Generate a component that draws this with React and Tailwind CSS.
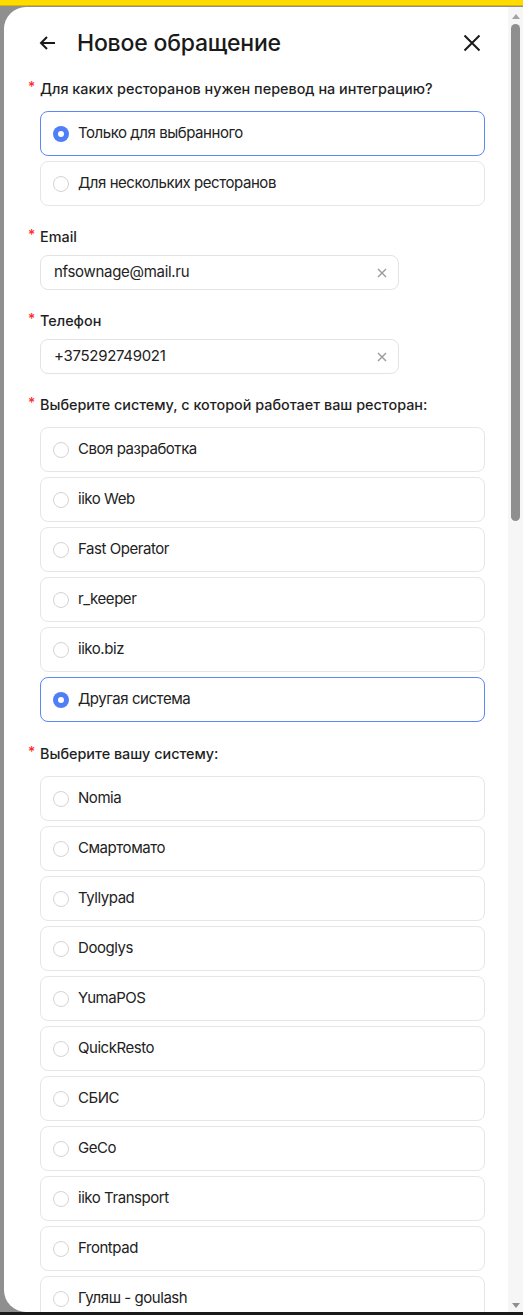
import { useState } from 'react';

const RESTAURANT_SCOPE = ['Только для выбранного', 'Для нескольких ресторанов'];
const SYSTEMS = ['Своя разработка', 'iiko Web', 'Fast Operator', 'r_keeper', 'iiko.biz', 'Другая система'];
const OTHER_SYSTEMS = [
  'Nomia',
  'Смартомато',
  'Tyllypad',
  'Dooglys',
  'YumaPOS',
  'QuickResto',
  'СБИС',
  'GeCo',
  'iiko Transport',
  'Frontpad',
  'Гуляш - goulash',
];

const font = { fontFamily: 'Inter, "Noto Sans", sans-serif' };

function Label({ children }) {
  return (
    <div className="flex items-start h-5 -ml-3 text-[14.4px] leading-5 font-medium text-[#1f1f1f]">
      <span className="w-3 text-[#ff2b2b] text-[14px] leading-4">*</span>
      <span>{children}</span>
    </div>
  );
}

function RadioOption({ label, checked, onSelect }) {
  return (
    <button
      type="button"
      onClick={onSelect}
      className={
        'flex items-center h-[45px] w-full rounded-[8px] border px-[12px] text-left ' +
        (checked ? 'border-[#5b87f7]' : 'border-[#e6e6e6]')
      }
    >
      {checked ? (
        <span className="flex items-center justify-center w-4 h-4 rounded-full bg-[#4f7ff6]">
          <span className="w-[6px] h-[6px] rounded-full bg-white" />
        </span>
      ) : (
        <span className="w-4 h-4 rounded-full border border-[#d4d4d4]" />
      )}
      <span className="ml-[9px] text-[15px] tracking-[-0.45px] text-[#222]">{label}</span>
    </button>
  );
}

function RadioGroup({ options, value, onChange }) {
  return (
    <div className="mt-3 flex flex-col gap-[5px]">
      {options.map((o) => (
        <RadioOption key={o} label={o} checked={value === o} onSelect={() => onChange(o)} />
      ))}
    </div>
  );
}

function TextInput({ value, onChange }) {
  return (
    <div className="mt-2 flex items-center h-[35px] w-[359px] rounded-[8px] border border-[#e3e3e3] pl-[13px] pr-[11px]">
      <input
        value={value}
        onChange={(e) => onChange(e.target.value)}
        className="flex-1 min-w-0 bg-transparent text-[15px] tracking-[-0.3px] text-[#222] outline-none"
        style={font}
      />
      <button type="button" onClick={() => onChange('')} className="text-[#9a9a9a]">
        <svg width="10" height="10" viewBox="0 0 10 10" stroke="currentColor" strokeWidth="1.4">
          <path d="M1 1l8 8M9 1l-8 8" />
        </svg>
      </button>
    </div>
  );
}

export default function App() {
  const [scope, setScope] = useState(RESTAURANT_SCOPE[0]);
  const [email, setEmail] = useState('nfsownage@mail.ru');
  const [phone, setPhone] = useState('+375292749021');
  const [system, setSystem] = useState('Другая система');
  const [otherSystem, setOtherSystem] = useState(null);

  return (
    <div className="h-[1315px] flex flex-col bg-[#8f8f8f] overflow-hidden" style={font}>
      <div className="h-[6px] bg-[#ffdb00] border-b border-[#d9b800]" />
      <div className="flex flex-1 min-h-0 pt-[1px]">
        <div className="w-[4px]" />
        {/* modal panel */}
        <div className="flex flex-1 min-h-0 bg-white rounded-l-[22px] overflow-hidden">
          <div className="flex-1 min-w-0 overflow-hidden pl-[36px] pr-[23px]">
            {/* header */}
            <div className="flex items-center h-[72px]">
              <button type="button" className="-ml-[2px] text-[#1a1a1a]">
                <svg width="20" height="20" viewBox="0 0 20 20" fill="none" stroke="currentColor" strokeWidth="2">
                  <path d="M17 10H3M9 4l-6 6 6 6" />
                </svg>
              </button>
              <h1 className="ml-[19px] text-[23px] font-medium text-[#1a1a1a] tracking-[-0.2px]">Новое обращение</h1>
              <button type="button" className="ml-auto mr-[4px] text-[#1a1a1a]">
                <svg width="18" height="18" viewBox="0 0 18 18" stroke="currentColor" strokeWidth="2">
                  <path d="M1.5 1.5l15 15M16.5 1.5l-15 15" />
                </svg>
              </button>
            </div>

            <div className="mt-[0px]">
              <Label>Для каких ресторанов нужен перевод на интеграцию?</Label>
              <RadioGroup options={RESTAURANT_SCOPE} value={scope} onChange={setScope} />
            </div>

            <div className="mt-[21px]">
              <Label>Email</Label>
              <TextInput value={email} onChange={setEmail} />
            </div>

            <div className="mt-[21px]">
              <Label>Телефон</Label>
              <TextInput value={phone} onChange={setPhone} />
            </div>

            <div className="mt-[21px]">
              <Label>Выберите систему, с которой работает ваш ресторан:</Label>
              <RadioGroup options={SYSTEMS} value={system} onChange={setSystem} />
            </div>

            <div className="mt-[22px]">
              <Label>Выберите вашу систему:</Label>
              <RadioGroup options={OTHER_SYSTEMS} value={otherSystem} onChange={setOtherSystem} />
            </div>
          </div>
          {/* scrollbar */}
          <div className="w-[15px] flex flex-col items-center bg-[#f6f6f6]">
            <div className="mt-[7px] w-0 h-0 border-l-[4px] border-r-[4px] border-b-[5px] border-l-transparent border-r-transparent border-b-[#a3a3a3]" />
            <div className="mt-[5px] w-[9px] h-[497px] rounded-full bg-[#8f8f8f]" />
            <div className="mt-auto mb-[4px] w-0 h-0 border-l-[4px] border-r-[4px] border-t-[5px] border-l-transparent border-r-transparent border-t-[#8f8f8f]" />
          </div>
        </div>
      </div>
      <div className="h-[3px] bg-[#1a1a1a]" />
    </div>
  );
}
